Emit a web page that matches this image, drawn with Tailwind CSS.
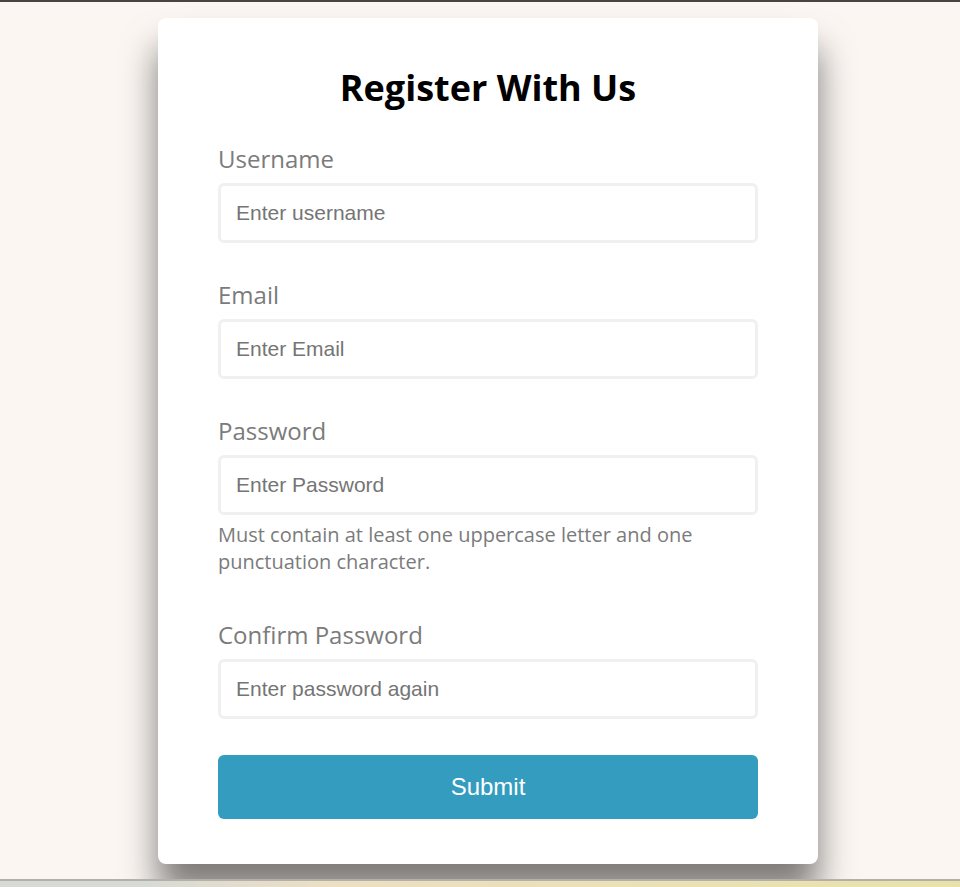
<!DOCTYPE html>
<html lang="en">
<head>
<meta charset="utf-8">
<meta name="viewport" content="width=device-width, initial-scale=1">
<title>Register</title>
<script src="https://cdn.jsdelivr.net/npm/@tailwindcss/browser@4"></script>
</head>
<body class="flex min-h-screen flex-col bg-[#fbf6f2] font-['Open_Sans',sans-serif]">
<div class="h-0.5 bg-[#474543]"></div>
<main class="flex grow justify-center overflow-hidden pt-4 pr-4 pb-[15px] pl-8">
  <form class="flex w-full max-w-[660px] flex-col rounded-lg bg-white px-[60px] py-[45px] shadow-[0_30px_35px_rgba(0,0,0,0.5)]">
    <h1 class="mb-[30px] text-center text-4xl leading-[50px] font-bold text-black">Register With Us</h1>
    <div class="mb-9 flex flex-col">
      <label for="username" class="mb-2 text-2xl leading-8 text-[#7b7b7b]">Username</label>
      <input id="username" type="text" placeholder="Enter username" class="h-[60px] w-full rounded-md border-3 border-[#f0f0f0] px-[15px] font-['Liberation_Sans',sans-serif] text-[21px] placeholder:text-[#757575]">
    </div>
    <div class="mb-9 flex flex-col">
      <label for="email" class="mb-2 text-2xl leading-8 text-[#7b7b7b]">Email</label>
      <input id="email" type="text" placeholder="Enter Email" class="h-[60px] w-full rounded-md border-3 border-[#f0f0f0] px-[15px] font-['Liberation_Sans',sans-serif] text-[21px] placeholder:text-[#757575]">
    </div>
    <div class="mb-9 flex flex-col">
      <label for="password" class="mb-2 text-2xl leading-8 text-[#7b7b7b]">Password</label>
      <input id="password" type="password" placeholder="Enter Password" class="h-[60px] w-full rounded-md border-3 border-[#f0f0f0] px-[15px] font-['Liberation_Sans',sans-serif] text-[21px] placeholder:text-[#757575]" aria-describedby="hint">
      <p id="hint" class="pt-[6px] pb-2 text-xl leading-[27px] text-[#7b7b7b]">Must contain at least one uppercase letter and one punctuation character.</p>
    </div>
    <div class="mb-9 flex flex-col">
      <label for="confirm" class="mb-2 text-2xl leading-8 text-[#7b7b7b]">Confirm Password</label>
      <input id="confirm" type="password" placeholder="Enter password again" class="h-[60px] w-full rounded-md border-3 border-[#f0f0f0] px-[15px] font-['Liberation_Sans',sans-serif] text-[21px] placeholder:text-[#757575]">
    </div>
    <button type="submit" class="h-16 w-full rounded-md bg-[#349cbe] font-['Liberation_Sans',sans-serif] text-2xl text-white">Submit</button>
  </form>
</main>
<div class="h-2 border-t-2 border-[#b2b0a9] bg-linear-to-r from-[#d8dad6] from-15% via-[#eddfc2] via-35% to-[#e9e2a8]"></div>
</body>
</html>
